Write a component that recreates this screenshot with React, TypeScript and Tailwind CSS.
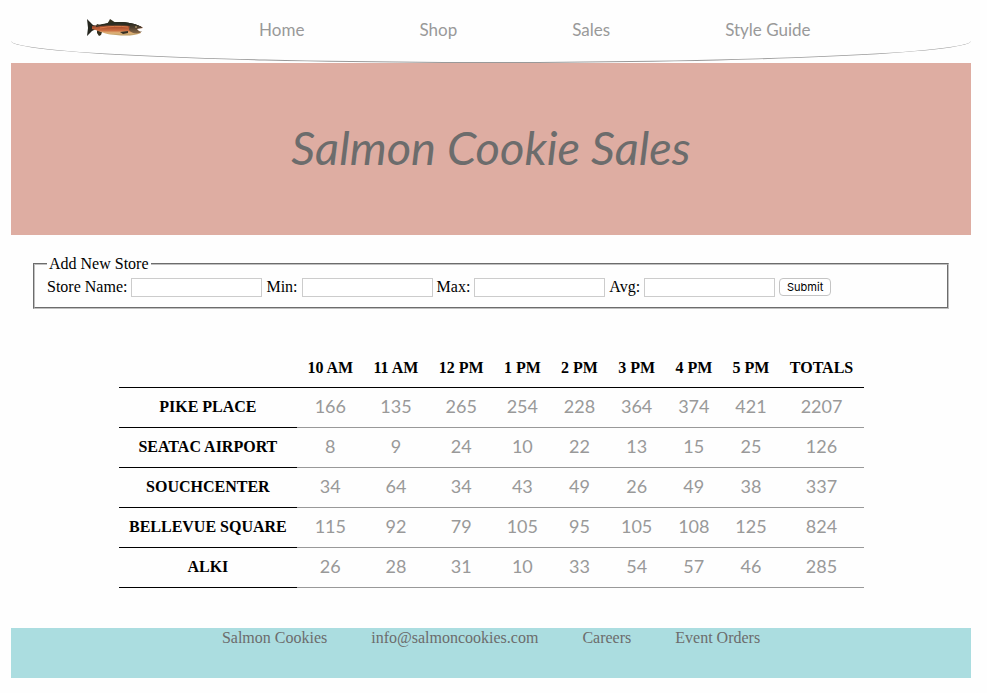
const navLinks = ["Home", "Shop", "Sales", "Style Guide"];
const hours = ["10 AM", "11 AM", "12 PM", "1 PM", "2 PM", "3 PM", "4 PM", "5 PM", "TOTALS"];
const stores = [
  { name: "PIKE PLACE", sales: [166, 135, 265, 254, 228, 364, 374, 421, 2207] },
  { name: "SEATAC AIRPORT", sales: [8, 9, 24, 10, 22, 13, 15, 25, 126] },
  { name: "SOUCHCENTER", sales: [34, 64, 34, 43, 49, 26, 49, 38, 337] },
  { name: "BELLEVUE SQUARE", sales: [115, 92, 79, 105, 95, 105, 108, 125, 824] },
  { name: "ALKI", sales: [26, 28, 31, 10, 33, 54, 57, 46, 285] },
];
const fields = [
  { id: "store", label: "Store Name:" },
  { id: "min", label: "Min:" },
  { id: "max", label: "Max:" },
  { id: "avg", label: "Avg:" },
];
const footerItems = ["Salmon Cookies", "info@salmoncookies.com", "Careers", "Event Orders"];

function Fish() {
  return (
    <svg width="58" height="20" viewBox="0 0 58 20" role="img" aria-label="Salmon">
      <defs>
        <linearGradient id="body" x1="0" y1="0" x2="0" y2="1">
          <stop offset="0" stopColor="#2b2e22" />
          <stop offset="0.22" stopColor="#40372a" />
          <stop offset="0.36" stopColor="#a94f2f" />
          <stop offset="0.62" stopColor="#cb6c40" />
          <stop offset="0.8" stopColor="#e0b47a" />
          <stop offset="1" stopColor="#b89a63" />
        </linearGradient>
        <linearGradient id="head" x1="0" y1="0" x2="0" y2="1">
          <stop offset="0" stopColor="#26281f" />
          <stop offset="0.5" stopColor="#544331" />
          <stop offset="1" stopColor="#8a6a49" />
        </linearGradient>
      </defs>
      <path d="M1 1 L4 4 L7 7 L10 8 L10 11 L6 13 L1 18 L2 10 Z" fill="#25261f" />
      <path d="M21 6 L23 3 L24 1 L30 5 Z M11 12 L16 14 L15 17 L13 18 L11 15 Z M10 8 L11 6 L14 7 Z" fill="#34301f" />
      <path d="M6 8 C14 7 22 4 32 4 C42 4 50 6 56 9 L57 11 L53 12 L55 15 C48 18 39 18 30 17 C22 17 16 14 6 11 Z" fill="url(#body)" />
      <path d="M14 10 C24 8 34 8 42 9" stroke="#dc7b48" strokeWidth="1" fill="none" />
      <path d="M10 8 C20 6 26 4 33 4 C42 4 50 6 56 9 L44 8 C34 6 24 6 10 9 Z" fill="#2b2c22" />
      <path d="M44 5 C50 6 54 8 57 10 L51 11 L53 13 L56 13 L54 15 C49 16 45 15 43 12 Z" fill="url(#head)" />
      <path d="M51 11 L57 10 L57 12 L54 12 L56 14 L53 13 Z" fill="#fefefe" />
      <path d="M34 14 L42 13 L42 15 L37 16 Z" fill="#353024" />
      <circle cx="50" cy="9" r="1" fill="#a58a60" />
    </svg>
  );
}

export default function App() {
  return (
    <div className="bg-[#fefefe] pr-4 pb-[15px] pl-[11px] font-['Liberation_Serif',serif] text-base text-black">
      <nav className="flex h-[63px] items-start gap-[13%] border-b border-[#999] pt-[18px] pl-[75px] [border-radius:0_0_50%_50%/0_0_22px_22px]">
        <a href="#home" className="shrink-0">
          <Fish />
        </a>
        {navLinks.map((label) => (
          <a key={label} href="#nav" className="font-[Lato,sans-serif] text-[17px] leading-6 whitespace-nowrap text-[#999]">
            {label}
          </a>
        ))}
      </nav>

      <header className="flex h-[172px] items-center justify-center bg-[#deada2] pb-1">
        <h1 className="font-[Lato,sans-serif] text-[47px] leading-none text-[#6c6c6c] italic">Salmon Cookie Sales</h1>
      </header>

      <main className="px-[22px]">
        <form className="pt-[17px]">
          <fieldset className="border-2 border-[#c0c0c0] px-3 pt-px pb-[10px] [border-style:groove]">
            <legend className="px-0.5 leading-6">Add New Store</legend>
            <div className="flex flex-wrap items-center gap-1">
              {fields.map((field) => (
                <div key={field.id} className="flex items-center gap-1">
                  <label htmlFor={field.id} className="leading-5">
                    {field.label}
                  </label>
                  <input id={field.id} type="text" className="h-[19px] w-[131px] border border-[#ccc] bg-white px-1 text-xs" />
                </div>
              ))}
              <button
                type="button"
                className="h-[18px] w-[52px] rounded border border-[#c4c4c4] bg-white font-[Inter,sans-serif] text-[11px] leading-4"
              >
                Submit
              </button>
            </div>
          </fieldset>
        </form>

        <table className="mx-auto mt-[38px] w-[745px] max-w-full border-collapse text-center">
          <thead>
            <tr className="h-10 border-b border-black">
              <td />
              {hours.map((hour) => (
                <th key={hour} scope="col" className="px-2.5 pt-0.5 font-bold whitespace-nowrap">
                  {hour}
                </th>
              ))}
            </tr>
          </thead>
          <tbody>
            {stores.map((store) => (
              <tr key={store.name} className="h-10">
                <th scope="row" className="border-b border-black px-2.5 font-bold whitespace-nowrap">
                  {store.name}
                </th>
                {store.sales.map((count, i) => (
                  <td key={i} className="border-b border-[#999] px-2 pb-0.5 font-[Lato,sans-serif] text-lg leading-6 text-[#999]">
                    {count}
                  </td>
                ))}
              </tr>
            ))}
          </tbody>
        </table>
      </main>

      <footer className="mt-10 flex h-[50px] justify-center gap-11 bg-[#abdde0] text-[#6c6c6c]">
        {footerItems.map((item) => (
          <a key={item} href="#footer" className="leading-5 whitespace-nowrap">
            {item}
          </a>
        ))}
      </footer>
    </div>
  );
}
